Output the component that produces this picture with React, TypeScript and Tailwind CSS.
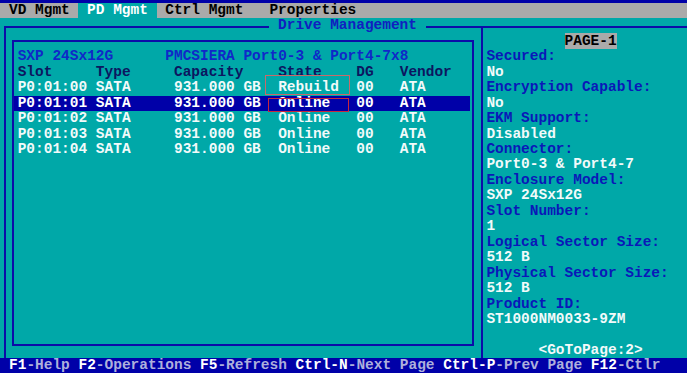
import React from "react";

const TEAL = "bg-[#00a8a8]";

type Drive = { slot: string; type: string; capacity: string; state: string; dg: string; vendor: string };

const drives: Drive[] = [
	{ slot: "P0:01:00", type: "SATA", capacity: "931.000 GB", state: "Rebuild", dg: "00", vendor: "ATA" },
	{ slot: "P0:01:01", type: "SATA", capacity: "931.000 GB", state: "Online", dg: "00", vendor: "ATA" },
	{ slot: "P0:01:02", type: "SATA", capacity: "931.000 GB", state: "Online", dg: "00", vendor: "ATA" },
	{ slot: "P0:01:03", type: "SATA", capacity: "931.000 GB", state: "Online", dg: "00", vendor: "ATA" },
	{ slot: "P0:01:04", type: "SATA", capacity: "931.000 GB", state: "Online", dg: "00", vendor: "ATA" },
];

const properties: [string, string][] = [
	["Secured:", "No"],
	["Encryption Capable:", "No"],
	["EKM Support:", "Disabled"],
	["Connector:", "Port0-3 & Port4-7"],
	["Enclosure Model:", "SXP 24Sx12G"],
	["Slot Number:", "1"],
	["Logical Sector Size:", "512 B"],
	["Physical Sector Size:", "512 B"],
	["Product ID:", "ST1000NM0033-9ZM"],
];

const keys: [string, string][] = [
	["F1", "-Help"],
	["F2", "-Operations"],
	["F5", "-Refresh"],
	["Ctrl-N", "-Next Page"],
	["Ctrl-P", "-Prev Page"],
	["F12", "-Ctlr"],
];

const cols = "grid grid-cols-[9ch_9ch_12ch_9ch_5ch_1fr]";

const App: React.FC = () => {
	return (
		<div
			className={`relative w-[687px] h-[373px] overflow-hidden ${TEAL} flex flex-col font-bold whitespace-pre text-[14.47px] leading-[15.45px]`}
			style={{ fontFamily: '"Liberation Mono", "DejaVu Sans Mono", monospace' }}
		>
			{/* title strip (cut off) */}
			<div className="h-[3px] shrink-0 bg-[#0000a8]" />

			{/* menu bar */}
			<div className="h-[15.45px] shrink-0 bg-[#aaaaaa] text-black flex pl-[0.3px]">
				<span className="w-[1ch]" />
				<span className="w-[8ch]">VD Mgmt</span>
				<span className={`w-[9ch] pl-[1ch] ${TEAL} text-white`}>PD Mgmt</span>
				<span className="w-[1ch]" />
				<span className="w-[12ch]">Ctrl Mgmt</span>
				<span>Properties</span>
			</div>

			{/* main frame */}
			<div className="relative h-[339.9px] shrink-0">
				<div className="absolute left-[269.4px] top-0 h-[15.45px] px-[1ch] bg-[#00a8a8] text-[#1020c0] z-10">
					Drive Management
				</div>
				<div className="mt-[7.7px] ml-[3.5px] h-[332.2px] border-l-2 border-t-2 border-[#0c0ca8] flex">
					{/* drive list */}
					<div className="w-[475.8px] pt-[12.3px] pl-[6.8px]">
						<div className="w-[462px] h-[306px] border-2 border-[#0c0ca8] pt-[6.85px]">
							<div className="flex px-[3.4px] text-[#1028c8]">
								<span className="w-[17ch]">SXP 24Sx12G</span>
								<span>PMCSIERA Port0-3 &amp; Port4-7x8</span>
							</div>
							<div className={`${cols} px-[3.4px] text-[#0c1660]`}>
								<span>Slot</span>
								<span>Type</span>
								<span>Capacity</span>
								<span>State</span>
								<span>DG</span>
								<span>Vendor</span>
							</div>
							{drives.map((d, i) => (
								<div
									key={d.slot}
									className={`${cols} px-[3.4px] mr-[2px] text-[#f2fafa] ${i === 1 ? "bg-[#0000a8] text-white" : ""}`}
								>
									<span>{d.slot}</span>
									<span>{d.type}</span>
									<span>{d.capacity}</span>
									<span>{d.state}</span>
									<span>{d.dg}</span>
									<span>{d.vendor}</span>
								</div>
							))}
						</div>
					</div>

					{/* properties */}
					<div className="flex-1 border-l-2 border-[#0c0ca8] pt-[5.7px] pl-[3.1px] flex flex-col">
						<div className="pl-[9ch]">
							<span className="bg-[#aaaaaa] text-black">PAGE-1</span>
						</div>
						{properties.map(([label, value]) => (
							<React.Fragment key={label}>
								<div className="text-[#0a18b8]">{label}</div>
								<div className="text-[#f2fafa]">{value}</div>
							</React.Fragment>
						))}
						<div className="h-[15.45px]" />
						<div className="pl-[6ch] text-[#f2fafa]">&lt;GoToPage:2&gt;</div>
					</div>
				</div>
			</div>

			{/* status bar */}
			<div className="h-[15.45px] shrink-0 bg-[#0000a8] pl-[9px] flex">
				{keys.map(([k, desc], i) => (
					<span key={k}>
						<span className="text-white">{k}</span>
						<span className="text-[#aeb0dc]">{desc}</span>
						{i < keys.length - 1 ? " " : ""}
					</span>
				))}
			</div>

			{/* marker boxes drawn over the list */}
			<div className="absolute left-[265px] top-[75px] w-[85px] h-[20px] border border-[#c86a6a]" />
			<div className="absolute left-[268px] top-[98px] w-[81px] h-[14px] border-[1.5px] border-[#c8283c]" />
		</div>
	);
};

export default App;
